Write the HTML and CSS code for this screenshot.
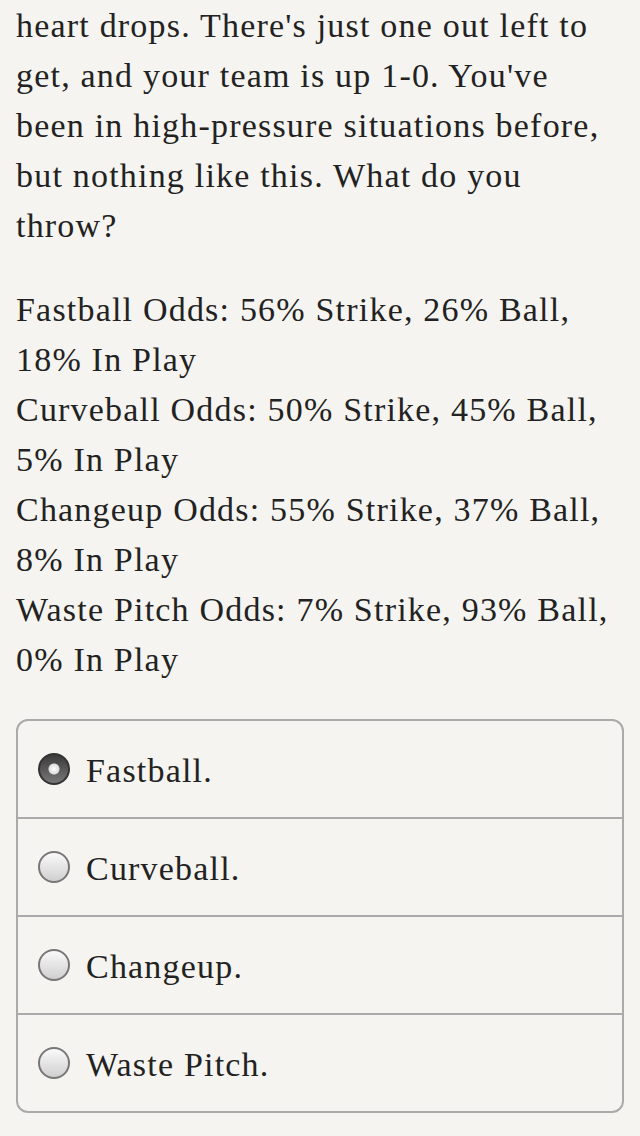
FILE: index.html
```html
<!DOCTYPE html>
<html lang="en">
<head>
    <meta charset="UTF-8">
    <meta name="viewport" content="width=device-width, initial-scale=1.0">
    <title>The Final Out</title>
    <link rel="stylesheet" href="styles.css">
</head>
<body>
    <div class="story">
        <p>heart drops. There's just one out left to get, and your team is up 1-0. You've been in high-pressure situations before, but nothing like this. What do you throw?</p>
        <p class="odds">
            Fastball Odds: 56% Strike, 26% Ball, 18% In Play<br>
            Curveball Odds: 50% Strike, 45% Ball, 5% In Play<br>
            Changeup Odds: 55% Strike, 37% Ball, 8% In Play<br>
            Waste Pitch Odds: 7% Strike, 93% Ball, 0% In Play
        </p>
    </div>

    <form class="choices" id="pitchForm">
        <label class="choice">
            <input type="radio" name="pitch" value="fastball" checked>
            <span>Fastball.</span>
        </label>
        <label class="choice">
            <input type="radio" name="pitch" value="curveball">
            <span>Curveball.</span>
        </label>
        <label class="choice">
            <input type="radio" name="pitch" value="changeup">
            <span>Changeup.</span>
        </label>
        <label class="choice">
            <input type="radio" name="pitch" value="waste">
            <span>Waste Pitch.</span>
        </label>
    </form>
</body>
</html>
```

FILE: styles.css
```css
* {
    box-sizing: border-box;
    margin: 0;
    padding: 0;
}

body {
    font-family: 'Liberation Serif', serif;
    font-size: 34px;
    letter-spacing: 1.2px;
    line-height: 50px;
    color: #222;
    background-color: #f6f4f0;
    padding: 1px 16px 0;
}

.story p {
    margin-bottom: 34px;
}

.choices {
    border: 2px solid #aaa;
    border-radius: 12px;
    display: flex;
    flex-direction: column;
}

.choice {
    display: flex;
    align-items: center;
    gap: 16px;
    height: 98px;
    padding: 0 20px;
    border-top: 2px solid #aaa;
    cursor: pointer;
}

.choice:first-child {
    height: 96px;
    border-top: none;
}

.choice span {
    padding-top: 4px;
}

.choice input {
    appearance: none;
    -webkit-appearance: none;
    width: 32px;
    height: 32px;
    border-radius: 50%;
    border: 2px solid #777;
    background: linear-gradient(#fafafa, #d0d0d0);
    flex-shrink: 0;
}

.choice input:checked {
    border-color: #333;
    background: radial-gradient(circle, #fff 0, #ddd 5px, transparent 6px), linear-gradient(#3a3a3a, #777);
}
```
